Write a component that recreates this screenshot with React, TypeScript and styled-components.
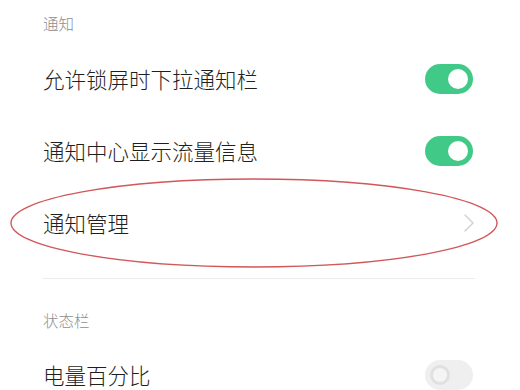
import styled, { createGlobalStyle } from "styled-components";

const GlobalStyle = createGlobalStyle`
  html, body {
    margin: 0;
    padding: 0;
    background: #ffffff;
  }
  body {
    font-family: "Noto Sans CJK SC", "Noto Sans", sans-serif;
  }
`;

export default function App() {
  return (
    <Page>
      <GlobalStyle />
      <SectionTitle $top={15} $height={43}>通知</SectionTitle>
      <Row>
        <Label>允许锁屏时下拉通知栏</Label>
        <Toggle $on />
      </Row>
      <Row>
        <Label>通知中心显示流量信息</Label>
        <Toggle $on />
      </Row>
      <Row>
        <Label>通知管理</Label>
        <Chevron viewBox="0 0 12 20">
          <path d="M2 2 L10 10 L2 18" fill="none" stroke="#d2d2d2" strokeWidth="1.5" strokeLinecap="round" strokeLinejoin="round" />
        </Chevron>
        <Circle viewBox="0 0 520 100">
          <ellipse cx="254" cy="49" rx="243" ry="44" fill="none" stroke="#d2575a" strokeWidth="1.4" />
        </Circle>
      </Row>
      <Divider />
      <SectionTitle $top={33} $height={60}>状态栏</SectionTitle>
      <Row>
        <Label>电量百分比</Label>
        <Toggle />
      </Row>
    </Page>
  );
}

const Page = styled.div`
  width: 520px;
  height: 390px;
  overflow: hidden;
  padding: 0 45px 0 43px;
  box-sizing: border-box;
  display: flex;
  flex-direction: column;
`;

const SectionTitle = styled.div<{ $top: number; $height: number }>`
  flex: none;
  box-sizing: border-box;
  height: ${(p) => p.$height}px;
  padding-top: ${(p) => p.$top}px;
  font-size: 15.5px;
  font-weight: 300;
  line-height: 16px;
  color: #8e8e8e;
`;

const Row = styled.div`
  flex: none;
  position: relative;
  height: 72px;
  display: flex;
  align-items: center;
  justify-content: space-between;
`;

const Label = styled.span`
  font-size: 21.5px;
  font-weight: 300;
  color: #1f1f1f;
  line-height: 1;
`;

const Toggle = styled.span<{ $on?: boolean }>`
  position: relative;
  width: 48px;
  height: 30px;
  margin-right: 2px;
  border-radius: 15px;
  background: ${(p) => (p.$on ? "#40c987" : "#efefef")};

  &::after {
    content: "";
    position: absolute;
    top: 5px;
    left: ${(p) => (p.$on ? "23px" : "5px")};
    width: 20px;
    height: 20px;
    box-sizing: border-box;
    border-radius: 50%;
    background: ${(p) => (p.$on ? "#ffffff" : "#f4f4f4")};
    border: ${(p) => (p.$on ? "none" : "3px solid #e0e0e0")};
  }
`;

const Chevron = styled.svg`
  width: 12px;
  height: 20px;
`;

const Circle = styled.svg`
  position: absolute;
  left: -43px;
  top: -13px;
  width: 520px;
  height: 100px;
  pointer-events: none;
`;

const Divider = styled.div`
  flex: none;
  height: 1px;
  margin-top: 19px;
  background: #ececec;
`;
